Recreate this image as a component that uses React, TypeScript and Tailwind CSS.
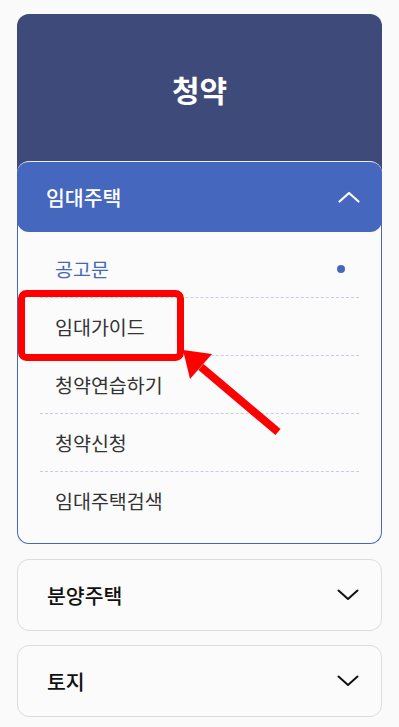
import React from "react";

const font = { fontFamily: '"Noto Sans CJK KR", "Noto Sans", sans-serif' };

function ChevronUp() {
  return (
    <svg width="22" height="12" viewBox="0 0 22 12" fill="none">
      <path d="M1.5 10.5 L11 2 L20.5 10.5" stroke="white" strokeWidth="2.2" strokeLinecap="round" strokeLinejoin="round" />
    </svg>
  );
}
function ChevronDown() {
  return (
    <svg width="22" height="12" viewBox="0 0 22 12" fill="none">
      <path d="M1.5 1.5 L11 10 L20.5 1.5" stroke="#111" strokeWidth="2" strokeLinecap="round" strokeLinejoin="round" />
    </svg>
  );
}

const items = ["공고문", "임대가이드", "청약연습하기", "청약신청", "임대주택검색"];

export default function App() {
  return (
    <div className="relative min-h-[727px] w-[399px] bg-[#fafafa]" style={font}>
      <div className="px-[17px] pt-[14px]">
        <div className="flex h-[159px] justify-center rounded-t-[12px] bg-[#3e4a79] pt-[57px]">
          <span className="text-[30px] font-bold leading-[36px] text-white">청약</span>
        </div>
        <div className="relative -mt-[12px]">
          <div className="relative z-10 flex h-[71px] items-center justify-between rounded-[12px] border-t border-[#e6ebf7] bg-[#4567be] pl-[29px] pr-[22px]">
            <span className="text-[20.5px] font-medium text-white">임대주택</span>
            <ChevronUp />
          </div>
          <div className="-mt-[14px] rounded-b-[12px] border-x border-b border-[#4567be] bg-[#fbfbfb] px-[22px] pb-[13px] pt-[22px]">
            {items.map((t, i) => (
              <div
                key={t}
                className={
                  "flex h-[58px] items-center justify-between pl-[15px] pr-[14px] " +
                  (i < items.length - 1 ? "border-b border-dashed border-[#c9cde0]" : "")
                }
              >
                <span className={"text-[19.5px] " + (i === 0 ? "text-[#4567be]" : "text-[#333]")}>{t}</span>
                {i === 0 && <span className="h-[8px] w-[8px] rounded-full bg-[#4567be]" />}
              </div>
            ))}
          </div>
        </div>
        <div className="mt-[15px] flex h-[72px] items-center justify-between rounded-[12px] border border-[#dcdcdc] bg-[#fbfbfb] pl-[29px] pr-[22px]">
          <span className="text-[20.5px] font-medium text-[#111]">분양주택</span>
          <ChevronDown />
        </div>
        <div className="mt-[14px] flex h-[72px] items-center justify-between rounded-[12px] border border-[#dcdcdc] bg-[#fbfbfb] pl-[29px] pr-[22px]">
          <span className="text-[20.5px] font-medium text-[#111]">토지</span>
          <ChevronDown />
        </div>
      </div>
      <svg className="pointer-events-none absolute left-0 top-0" width="399" height="727" viewBox="0 0 399 727">
        <rect x="21.5" y="293.5" width="159" height="64" rx="5" fill="none" stroke="#ff0000" strokeWidth="7" />
        <line x1="201" y1="367" x2="278" y2="432" stroke="#ff0000" strokeWidth="8" />
        <polygon points="183,350 212,354 190,379" fill="#ff0000" />
      </svg>
    </div>
  );
}
